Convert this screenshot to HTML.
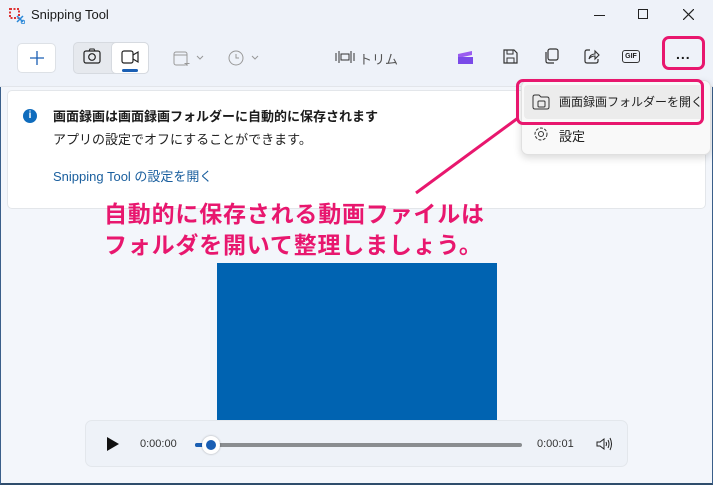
<!DOCTYPE html>
<html><head><meta charset="utf-8"><style>
*{margin:0;padding:0;box-sizing:border-box}
body{width:713px;height:485px;overflow:hidden;background:#f3f6fb;font-family:"Liberation Sans","Noto Sans CJK JP",sans-serif;position:relative;color:#1a1a1a}
.a{position:absolute;white-space:nowrap}
.win{left:0;top:0;width:713px;height:485px;border:1px solid #3a5f8a;border-top:none;border-bottom:2px solid #2f4d6c;background:#f3f6fb}
</style></head><body>
<div class="a win"></div>
<div class="a" style="left:0;top:0;width:713px;height:86px;background:#eef2f9"></div>
<div class="a" style="left:0;top:86px;width:713px;height:1px;background:#e2e5ea"></div>
<svg class="a" style="left:9px;top:8px" width="16" height="16"><rect x="1" y="1" width="9" height="9" fill="none" stroke="#d33" stroke-width="2" stroke-dasharray="2 1.5"/><path d="M8 8 L14 14 M14 8 L8 14" stroke="#2a88d8" stroke-width="1.5"/><circle cx="14" cy="14" r="1.8" fill="none" stroke="#2a88d8"/></svg>
<div class="a" style="left:31px;top:7px;font-size:13px">Snipping Tool</div>
<div class="a" style="left:594px;top:15px;width:11px;height:1px;background:#222"></div>
<div class="a" style="left:638px;top:9px;width:10px;height:10px;border:1.3px solid #222"></div>
<svg class="a" style="left:683px;top:9px" width="11" height="11"><path d="M0 0L11 11M11 0L0 11" stroke="#222" stroke-width="1.2"/></svg>
<div class="a" style="left:17px;top:43px;width:39px;height:30px;background:#fff;border:1px solid #dde1e6;border-radius:5px"></div>
<svg class="a" style="left:29px;top:50px" width="16" height="16"><path d="M8 1V15M1 8H15" stroke="#1a5fb4" stroke-width="1.3"/></svg>
<div class="a" style="left:73px;top:42px;width:76px;height:32px;background:#e6e9ee;border:1px solid #d6dae0;border-radius:5px"></div>
<div class="a" style="left:111px;top:42px;width:38px;height:32px;background:#fff;border:1px solid #d6dae0;border-radius:5px"></div>
<svg class="a" style="left:83px;top:48px" width="18" height="16"><rect x="1" y="3" width="16" height="12" rx="2" fill="none" stroke="#222" stroke-width="1.2"/><circle cx="9" cy="9" r="3.3" fill="none" stroke="#222" stroke-width="1.2"/><path d="M6 3L7 1H11L12 3" fill="none" stroke="#222"/></svg>
<svg class="a" style="left:121px;top:50px" width="18" height="14"><rect x="1" y="1" width="11" height="12" rx="2" fill="none" stroke="#222" stroke-width="1.2"/><path d="M12 5L17 2V12L12 9" fill="none" stroke="#222" stroke-width="1.2"/></svg>
<div class="a" style="left:122px;top:69px;width:16px;height:3px;border-radius:2px;background:#1a5fb4"></div>
<svg class="a" style="left:172px;top:49px" width="34" height="18"><rect x="2" y="3" width="13" height="13" rx="2" fill="none" stroke="#999"/><path d="M2 6H15M15 12v5M12.5 14.5h5" stroke="#999"/><path d="M25 7l3 3 3-3" fill="none" stroke="#999"/></svg>
<svg class="a" style="left:227px;top:49px" width="34" height="18"><circle cx="9" cy="9" r="7" fill="none" stroke="#999"/><path d="M9 5V9H12" fill="none" stroke="#999"/><path d="M25 7l3 3 3-3" fill="none" stroke="#999"/></svg>
<svg class="a" style="left:335px;top:49px" width="20" height="16"><path d="M1 4V12M4 2V14M16 2V14M19 4V12" stroke="#333"/><rect x="6" y="5" width="8" height="6" fill="none" stroke="#333"/></svg>
<div class="a" style="left:359px;top:49px;font-size:13px;color:#555">トリム</div>
<svg class="a" style="left:457px;top:48px" width="17" height="17"><path d="M1 6L15 3V7L1 10Z" fill="#9a5cf0"/><rect x="1" y="9" width="15" height="7" fill="#7a4ae8"/></svg>
<svg class="a" style="left:503px;top:49px" width="15" height="15"><path d="M1 1H11L14 4V14H1Z" fill="none" stroke="#333" stroke-width="1.2"/><rect x="4" y="9" width="7" height="5" fill="none" stroke="#333"/><rect x="4" y="1" width="6" height="4" fill="none" stroke="#333"/></svg>
<svg class="a" style="left:543px;top:48px" width="16" height="16"><rect x="5" y="1" width="10" height="11" rx="2" fill="none" stroke="#333" stroke-width="1.2"/><path d="M3 4V13Q3 15 5 15H11" fill="none" stroke="#333" stroke-width="1.2"/></svg>
<svg class="a" style="left:584px;top:48px" width="16" height="16"><path d="M6 2H3Q1 2 1 4V13Q1 15 3 15H12Q14 15 14 13V11" fill="none" stroke="#333" stroke-width="1.2"/><path d="M5 11Q6 6 11 6V3L15 7L11 11V8Q7 8 5 11Z" fill="none" stroke="#333" stroke-width="1.1"/></svg>
<div class="a" style="left:622px;top:50px;width:18px;height:13px;border:1.2px solid #333;border-radius:3px;font-size:7px;font-weight:bold;text-align:center;line-height:11px">GIF</div>
<div class="a" style="left:662px;top:36px;width:43px;height:34px;border:3px solid #e8176e;border-radius:7px"></div>
<div class="a" style="left:676px;top:46px;font-size:14px;font-weight:bold;letter-spacing:1px">...</div>
<div class="a" style="left:7px;top:90px;width:699px;height:119px;background:#fff;border:1px solid #e3e6ea;border-radius:5px"></div>
<div class="a" style="left:23px;top:109px;width:14px;height:14px;border-radius:50%;background:#0f6cbd;color:#fff;font-size:10px;font-weight:bold;text-align:center;line-height:14px">i</div>
<div class="a" style="left:53px;top:106px;font-size:13px;font-weight:bold;color:#1a1a1a">画面録画は画面録画フォルダーに自動的に保存されます</div>
<div class="a" style="left:53px;top:129px;font-size:13px;color:#222">アプリの設定でオフにすることができます。</div>
<div class="a" style="left:53px;top:166px;font-size:13px;color:#1a5f9e">Snipping Tool の設定を開く</div>
<div class="a" style="left:521px;top:80px;width:190px;height:75px;background:#f9f9f9;border:1px solid #e0e0e0;border-radius:7px;box-shadow:0 3px 8px rgba(0,0,0,.15)"></div>
<div class="a" style="left:524px;top:85px;width:180px;height:34px;background:#ececec;border-radius:4px"></div>
<div class="a" style="left:516px;top:79px;width:188px;height:46px;border:3px solid #e8176e;border-radius:7px"></div>
<svg class="a" style="left:532px;top:94px" width="18" height="16"><path d="M1 3Q1 1 3 1H7L9 3H15Q17 3 17 5V13Q17 15 15 15H3Q1 15 1 13Z" fill="none" stroke="#333"/><rect x="6" y="7" width="7" height="6" rx="1" fill="none" stroke="#333"/></svg>
<div class="a" style="left:559px;top:93px;font-size:12px;color:#222">画面録画フォルダーを開く</div>
<svg class="a" style="left:533px;top:127px" width="16" height="14"><circle cx="8" cy="7" r="2.5" fill="none" stroke="#333"/><circle cx="8" cy="7" r="6" fill="none" stroke="#333" stroke-dasharray="3 1.5"/></svg>
<div class="a" style="left:559px;top:126px;font-size:13px;color:#222">設定</div>
<svg class="a" style="left:0;top:0" width="713" height="485"><path d="M518 118L416 193" stroke="#e8176e" stroke-width="3"/></svg>
<div class="a" style="left:104px;top:199px;font-size:23px;font-weight:bold;color:#e8176e;line-height:31px;letter-spacing:0.8px">自動的に保存される動画ファイルは<br>フォルダを開いて整理しましょう。</div>
<div class="a" style="left:217px;top:263px;width:280px;height:157px;background:#0063b1"></div>
<div class="a" style="left:85px;top:420px;width:543px;height:47px;background:#eef2f8;border:1px solid #e3e7ec;border-radius:7px"></div>
<svg class="a" style="left:106px;top:436px" width="14" height="16"><path d="M1 1L13 8L1 15Z" fill="#111"/></svg>
<div class="a" style="left:140px;top:438px;font-size:11px;color:#333">0:00:00</div>
<div class="a" style="left:195px;top:443px;width:327px;height:4px;border-radius:2px;background:#8a8d90"></div>
<div class="a" style="left:195px;top:443px;width:15px;height:4px;border-radius:2px;background:#1a5fb4"></div>
<div class="a" style="left:202px;top:436px;width:18px;height:18px;border-radius:50%;background:#fff;box-shadow:0 0 2px rgba(0,0,0,.3)"></div>
<div class="a" style="left:206px;top:440px;width:10px;height:10px;border-radius:50%;background:#1a5fb4"></div>
<div class="a" style="left:537px;top:438px;font-size:11px;color:#333">0:00:01</div>
<svg class="a" style="left:596px;top:437px" width="16" height="14"><path d="M1 5H4L8 2V12L4 9H1Z" fill="none" stroke="#222"/><path d="M10 5Q11 7 10 9M12 3Q14 7 12 11M14 1Q17 7 14 13" fill="none" stroke="#222"/></svg>
</body></html>
